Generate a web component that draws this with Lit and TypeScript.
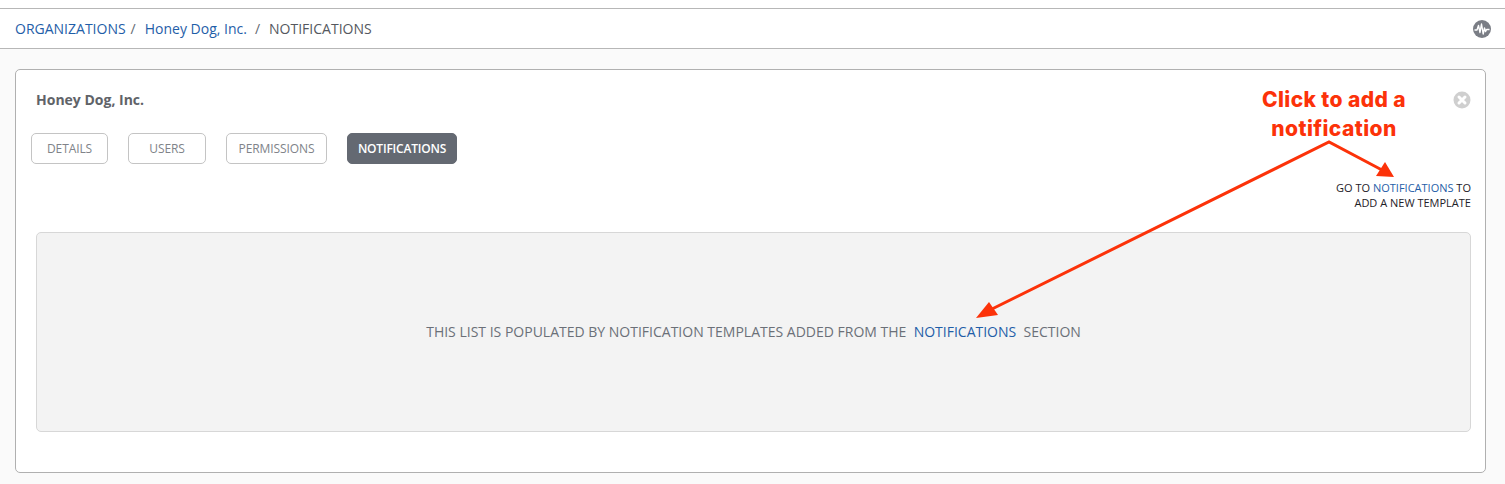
import { LitElement, html, css } from "lit";
import { customElement } from "lit/decorators.js";

@customElement("app-root")
export class AppRoot extends LitElement {
  static styles = css`
    :host { display: block; position: relative; width: 1505px; height: 484px; overflow: hidden; background: #fafafa; font-family: "Open Sans", sans-serif; color: #646972; }
    a { color: #1f5ea8; text-decoration: none; }
    .top { height: 8px; background: #fff; border-bottom: 1px solid #b7b7b7; }
    .crumbs { height: 39px; background: #fff; border-bottom: 1px solid #b7b7b7; display: flex; align-items: center; justify-content: space-between; padding: 0 14px 0 15px; font-size: 14px; }
    .crumbs .sep { margin: 0 9px 0 5px; color: #646972; }
    .crumbs .sep2 { margin: 0 9px 0 8px; color: #646972; }
    .crumbs .cur { color: #55585e; }
    .path { display: flex; align-items: center; }
    .activity { display: block; }
    .card { margin: 20px 19px 0 15px; height: 404px; box-sizing: border-box; background: #fff; border: 1px solid #b0b0b0; border-radius: 5px; padding: 20px 14px 20px 20px; position: relative; }
    .title { font-size: 14px; font-weight: 700; color: #606368; line-height: 20px; }
    .close { position: absolute; top: 21px; right: 14px; display: block; }
    .tabs { display: flex; gap: 20px; margin: 23px 0 0 -5px; }
    .tab { height: 31px; box-sizing: border-box; border: 1px solid #c4c4c4; border-radius: 5px; background: #fff; color: #808389; font-size: 12px; display: flex; align-items: center; justify-content: center; letter-spacing: -0.1px; }
    .tab.active { background: #646972; border-color: #646972; color: #fff; font-weight: 600; letter-spacing: -0.2px; }
    .help { margin-top: 16px; text-align: right; font-size: 11px; line-height: 15px; color: #1e2128; }
    .empty { margin-top: 22px; height: 200px; box-sizing: border-box; background: #f3f3f3; border: 1px solid #d7d7d7; border-radius: 5px; display: flex; align-items: center; justify-content: center; padding-bottom: 2px; font-size: 14px; color: #6b7078; white-space: pre; }
    .callout { position: absolute; left: 1234px; top: 85px; width: 200px; text-align: center; font-family: "Inter", sans-serif; font-weight: 800; font-size: 21px; line-height: 29px; letter-spacing: 0.4px; color: #fc3209; }
    .arrows { position: absolute; left: 0; top: 0; pointer-events: none; }
  `;

  render() {
    return html`
      <div class="top"></div>
      <div class="crumbs">
        <div class="path">
          <a href="#">ORGANIZATIONS</a><span class="sep">/</span>
          <a href="#">Honey Dog, Inc.</a><span class="sep2">/</span>
          <span class="cur">NOTIFICATIONS</span>
        </div>
        <svg class="activity" width="18" height="18" viewBox="0 0 18 18">
          <circle cx="9" cy="9" r="9" fill="#7a7d85"/>
          <path d="M1.5 10 L4 10 L5.5 5.5 L7 12.5 L8.5 4 L10.2 14 L11.5 8 L12.6 11.5 L13.6 9.5 L16.5 9.5" fill="none" stroke="#fff" stroke-width="1.4" stroke-linejoin="round"/>
        </svg>
      </div>
      <div class="card">
        <div class="title">Honey Dog, Inc.</div>
        <svg class="close" width="18" height="18" viewBox="0 0 18 18">
          <circle cx="9" cy="9" r="8.5" fill="#cfcfcf"/>
          <path d="M6 6 L12 12 M12 6 L6 12" stroke="#fff" stroke-width="3" stroke-linecap="round"/>
        </svg>
        <div class="tabs">
          <div class="tab" style="width:77px">DETAILS</div>
          <div class="tab" style="width:78px">USERS</div>
          <div class="tab" style="width:101px">PERMISSIONS</div>
          <div class="tab active" style="width:110px">NOTIFICATIONS</div>
        </div>
        <div class="help">GO TO <a href="#">NOTIFICATIONS</a> TO<br />ADD A NEW TEMPLATE</div>
        <div class="empty">THIS LIST IS POPULATED BY NOTIFICATION TEMPLATES ADDED FROM THE  <a href="#">NOTIFICATIONS</a>  SECTION</div>
      </div>
      <div class="callout">Click to add a<br />notification</div>
      <svg class="arrows" width="1505" height="484" viewBox="0 0 1505 484">
        <path d="M990 310 L1329 142 L1382 170" fill="none" stroke="#fc3209" stroke-width="3"/>
        <path d="M976 318 L989 302 L998 315 Z" fill="#fc3209"/>
        <path d="M1394 177 L1376 176 L1385 162 Z" fill="#fc3209"/>
      </svg>
    `;
  }
}
